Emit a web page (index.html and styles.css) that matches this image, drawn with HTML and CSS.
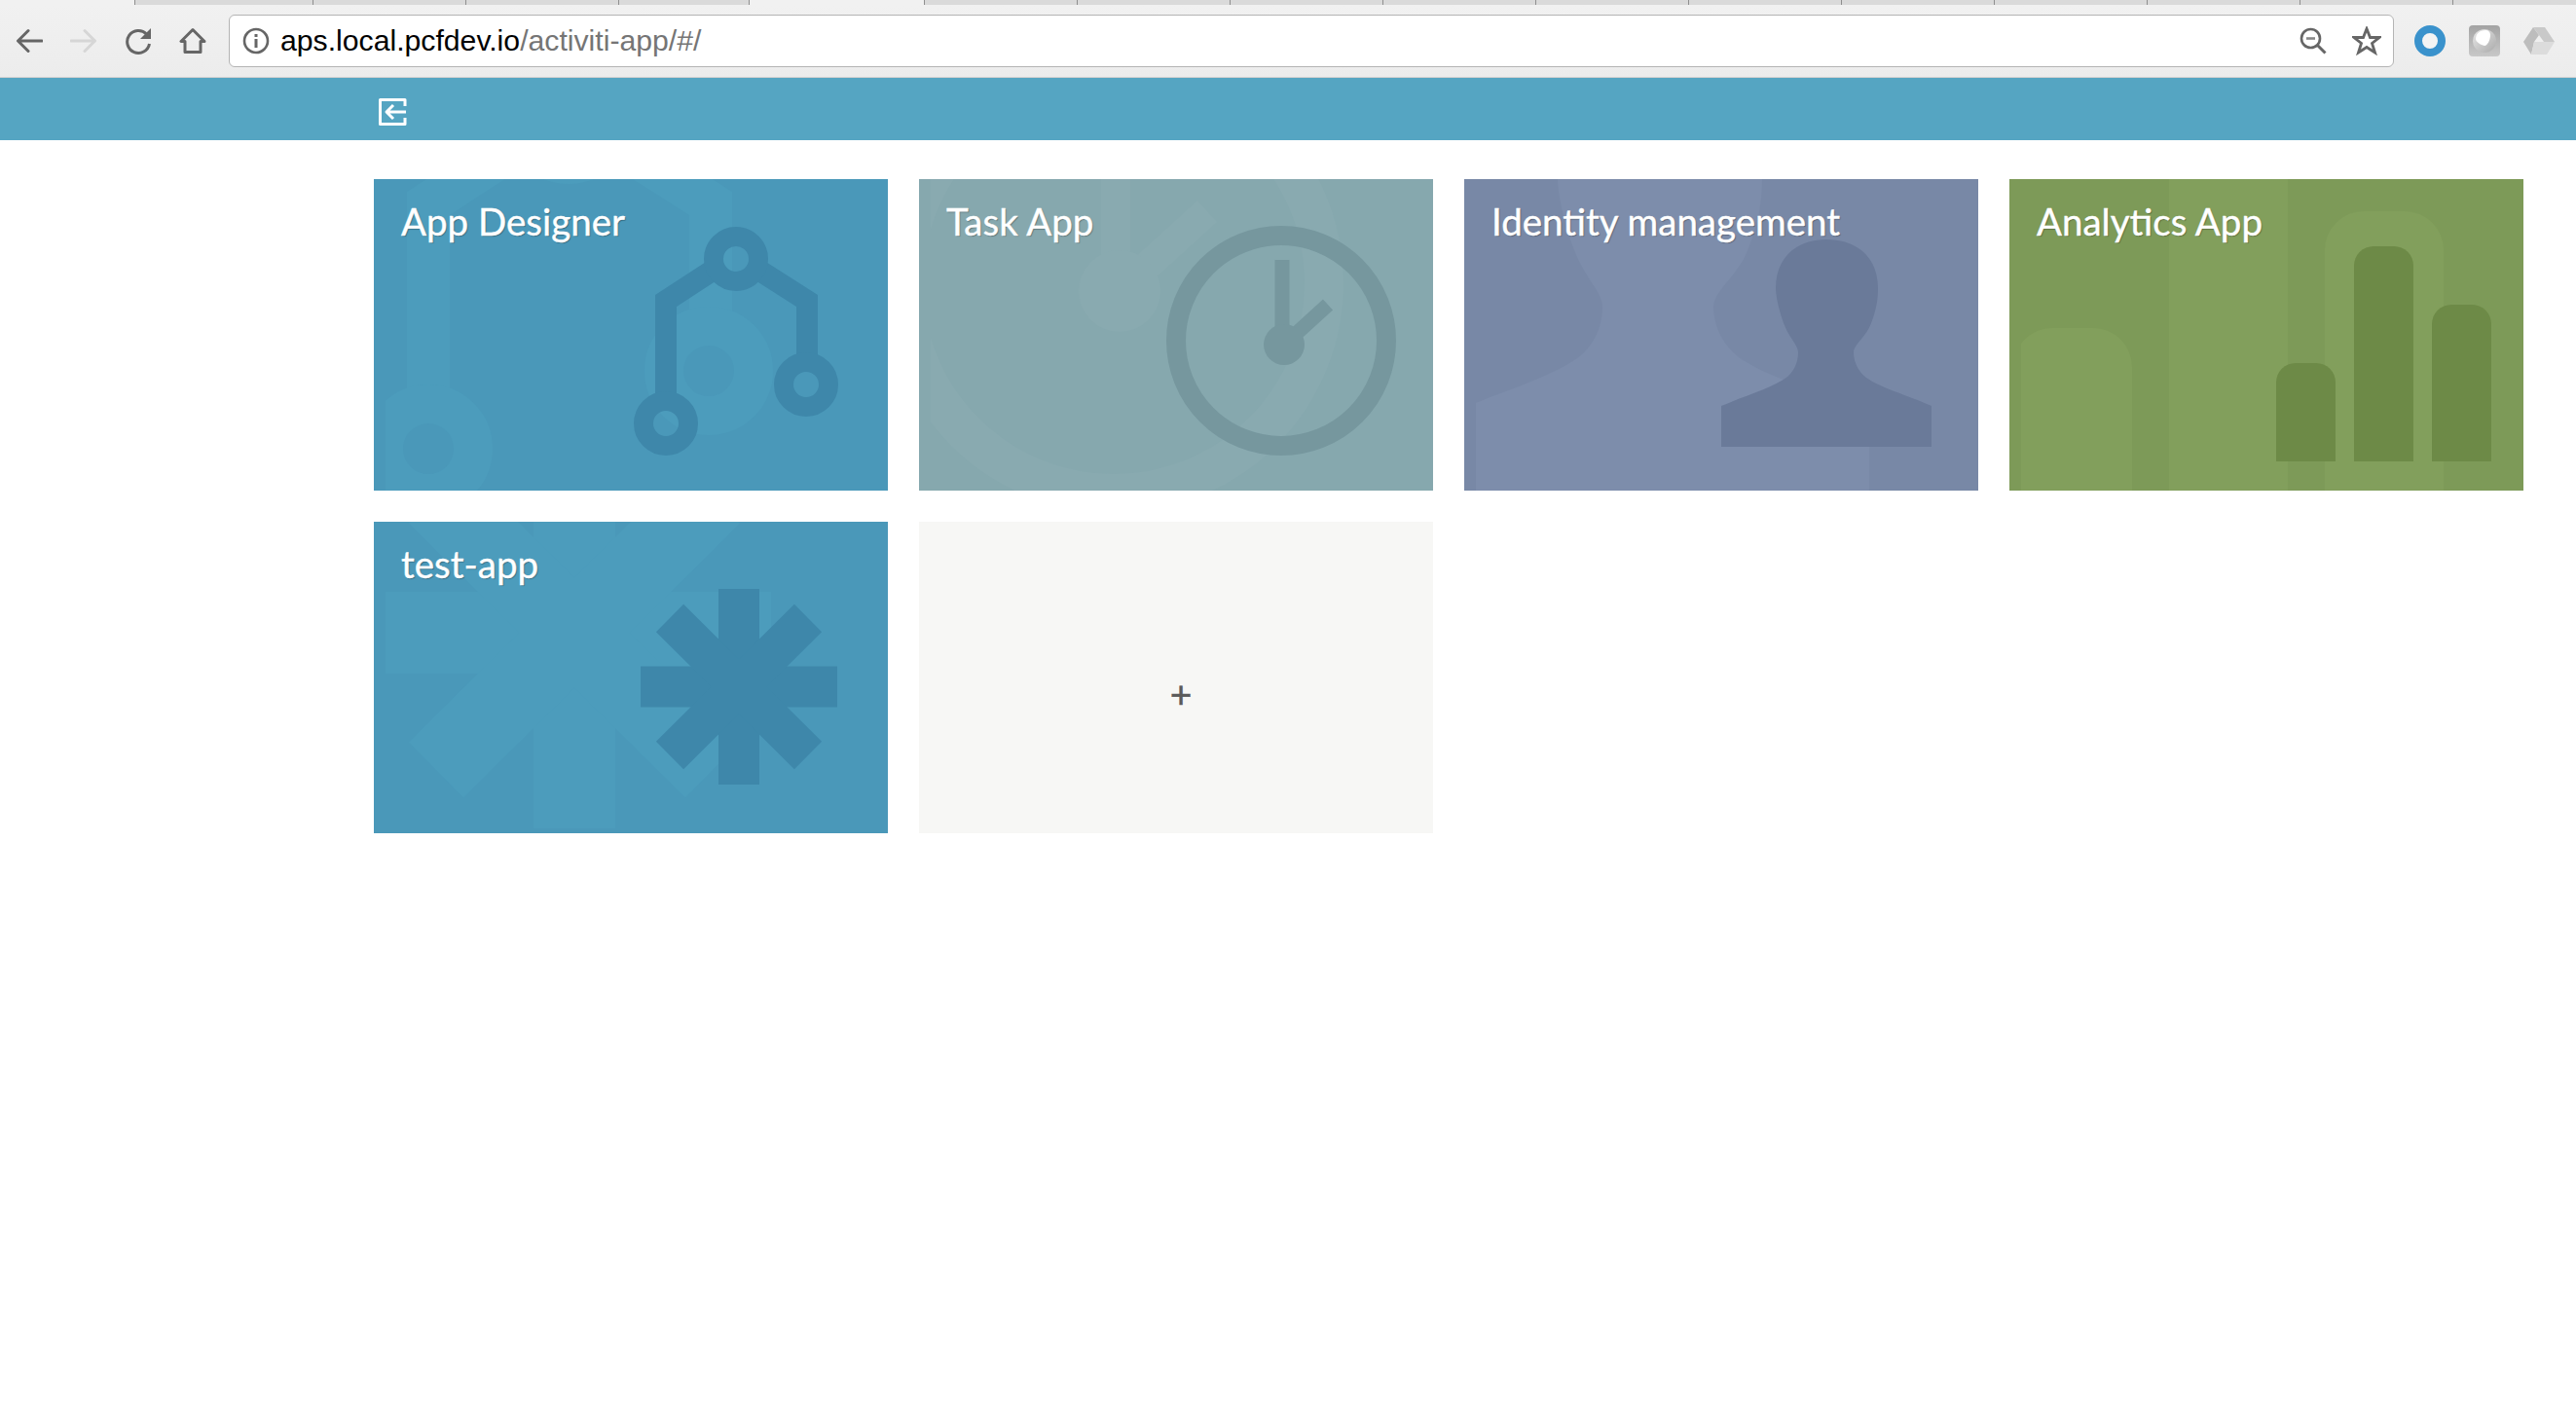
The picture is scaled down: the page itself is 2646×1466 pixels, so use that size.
FILE: index.html
```html
<!DOCTYPE html>
<html lang="en">
<head>
    <meta charset="UTF-8">
    <title>Activiti App</title>
    <link rel="stylesheet" href="styles.css">
</head>
<body>
    <!-- shapes shared by the card icons and their big faded copies -->
    <svg class="defs" width="0" height="0">
        <defs>
            <clipPath id="card-clip"><rect x="12" y="0" width="516" height="320"/></clipPath>
            <linearGradient id="ext-bg" x1="0" y1="0" x2="0" y2="1"><stop offset="0" stop-color="#a3a3a3"/><stop offset="1" stop-color="#c8c8c8"/></linearGradient>
            <linearGradient id="ext-disc" x1="0" y1="0" x2="1" y2="1"><stop offset="0" stop-color="#e8e8e8"/><stop offset="1" stop-color="#ababab"/></linearGradient>
            <g id="icon-designer" fill="none" stroke="currentColor">
                <path stroke-width="22" d="M300 232V125L346 95M398 95L445 125V192"/>
                <circle cx="372" cy="82" r="23" stroke-width="20"/>
                <circle cx="300" cy="251" r="23" stroke-width="20"/>
                <circle cx="444" cy="211" r="23" stroke-width="20"/>
            </g>
            <g id="icon-clock" fill="none" stroke="currentColor">
                <circle cx="372" cy="166" r="108" stroke-width="20"/>
                <path stroke-width="15" d="M373 83V170M375 170L420 129"/>
                <circle cx="375" cy="170" r="21" fill="currentColor" stroke="none"/>
            </g>
            <path id="icon-person" fill="currentColor" d="M264 233C290 222 318 214 332 203C341 195 343 185 343 178C343 170 333 163 327 145C322 130 320 118 320 112C320 80 342 62 372 62C403 62 425 80 425 112C425 125 423 135 418 148C413 162 400 170 400 178C400 187 404 197 413 204C427 214 455 222 480 233V275H264Z"/>
            <g id="icon-bars" fill="currentColor">
                <path d="M274 290V209a20 20 0 0 1 20-20h21a20 20 0 0 1 20 20V290Z"/>
                <path d="M354 290V89a20 20 0 0 1 20-20h21a20 20 0 0 1 20 20V290Z"/>
                <path d="M434 290V149a20 20 0 0 1 20-20h21a20 20 0 0 1 20 20V290Z"/>
            </g>
            <g id="icon-star" fill="none" stroke="currentColor">
                <path stroke-width="42" d="M375 69V270"/>
                <path stroke-width="42" d="M274 169.500H476"/>
                <path stroke-width="40" d="M304 99L446 240M446 99L304 240"/>
            </g>
        </defs>
    </svg>

    <div class="tab-strip">
        <span class="tab tab-first"></span><span class="tab"></span><span class="tab"></span><span class="tab tab-short"></span><span class="tab tab-active"></span>
        <span class="tab"></span><span class="tab"></span><span class="tab"></span><span class="tab"></span><span class="tab"></span>
        <span class="tab"></span><span class="tab"></span><span class="tab"></span><span class="tab"></span><span class="tab"></span>
        <span class="tab tab-last"></span>
    </div>

    <div class="toolbar">
        <svg class="tool-icon" viewBox="0 0 28 28" fill="none" stroke="#666" stroke-width="3" stroke-linejoin="round" stroke-linecap="round"><path d="M27 14H3M13 3.500L2.500 14L13 24.500"/></svg>
        <svg class="tool-icon" viewBox="0 0 28 28" fill="none" stroke="#d6d6d6" stroke-width="3" stroke-linejoin="round" stroke-linecap="round"><path d="M1 14H25M15 3.500L25.500 14L15 24.500"/></svg>
        <svg class="tool-icon" viewBox="0 0 28 28" fill="none" stroke="#666" stroke-width="3"><path d="M22.500 7A11.500 11.500 0 1 0 25.500 17"/><path fill="#666" stroke="none" d="M27 1V12H16Z"/></svg>
        <svg class="tool-icon" viewBox="0 0 28 28" fill="none" stroke="#666" stroke-width="3" stroke-linejoin="round"><path d="M14 2.500L2 14.500H6V25.500H22V14.500H26Z"/></svg>
        <div class="omnibox">
            <svg class="info-icon" viewBox="0 0 28 28" fill="none" stroke="#666" stroke-width="2.600"><circle cx="14" cy="14" r="12"/><path stroke-width="3" d="M14 12V21M14 7V10"/></svg>
            <span class="url"><b>aps.local.pcfdev.io</b>/activiti-app/#/</span>
            <svg class="zoom-icon" viewBox="0 0 28 28" fill="none" stroke="#666" stroke-width="2.600"><circle cx="11.500" cy="11.500" r="9.500"/><path stroke-width="3" d="M18 18L26.500 26.500"/><path stroke="#888" d="M7 11.500H16"/></svg>
            <svg class="star-icon" viewBox="0 0 30 30" fill="none" stroke="#666" stroke-width="2.800"><path d="M15 2.500L18.500 11.500H28L20.500 17.500L23.500 27L15 21.500L6.500 27L9.500 17.500L2 11.500H11.500Z"/></svg>
        </div>
        <div class="extensions">
            <span class="ext-ring"></span>
            <svg class="ext-icon" viewBox="0 0 32 32"><rect width="32" height="32" rx="4" fill="url(#ext-bg)"/><circle cx="16" cy="16" r="12" fill="url(#ext-disc)"/><path fill="#fff" d="M7 14C7 8 12 5 17 5C20 5 22 7 22 10C22 15 19 21 16 21C12 20 7 17 7 14Z"/></svg>
            <svg class="ext-icon" viewBox="0 -2 32 32"><path fill="#bdbdbd" d="M10 0L16 8L11 15L8 28L0 15Z"/><path fill="#c9c9c9" d="M10 0H22L32 15H21L16 8Z"/><path fill="#dcdcdc" d="M11 15H32L24 28H8Z"/></svg>
        </div>
    </div>

    <header class="app-bar">
        <svg class="logout-icon" viewBox="0 0 30 30" fill="none" stroke="#fff" stroke-width="3" stroke-linejoin="round"><path d="M28 9V2.500H2.500V27.500H28V21"/><path d="M29 15H10M16 8L9 15L16 22"/></svg>
    </header>

    <main class="tiles">
        <a class="tile tile-blue">
            <svg class="tile-art" viewBox="0 0 528 320"><g clip-path="url(#card-clip)"><use class="ghost" href="#icon-designer" transform="translate(-544 -225) scale(2)"/></g><use class="mark" href="#icon-designer"/></svg>
            <h3>App Designer</h3>
        </a>
        <a class="tile tile-teal">
            <svg class="tile-art" viewBox="0 0 528 320"><g clip-path="url(#card-clip)"><use class="ghost" href="#icon-clock" transform="translate(-544 -225) scale(2)"/></g><use class="mark" href="#icon-clock"/></svg>
            <h3>Task App</h3>
        </a>
        <a class="tile tile-slate">
            <svg class="tile-art" viewBox="0 0 528 320"><g clip-path="url(#card-clip)"><use class="ghost" href="#icon-person" transform="translate(-544 -225) scale(2)"/></g><use class="mark" href="#icon-person"/></svg>
            <h3>Identity management</h3>
        </a>
        <a class="tile tile-green">
            <svg class="tile-art" viewBox="0 0 528 320"><g clip-path="url(#card-clip)"><use class="ghost" href="#icon-bars" transform="translate(-544 -225) scale(2)"/></g><use class="mark" href="#icon-bars"/></svg>
            <h3>Analytics App</h3>
        </a>
        <a class="tile tile-blue">
            <svg class="tile-art" viewBox="0 0 528 320"><g clip-path="url(#card-clip)"><use class="ghost" href="#icon-star" transform="translate(-544 -225) scale(2)"/></g><use class="mark" href="#icon-star"/></svg>
            <h3>test-app</h3>
        </a>
        <a class="tile tile-add">+</a>
    </main>
</body>
</html>
```

FILE: styles.css
```css
body {
    margin: 0;
    background: #fff;
    font-family: "Lato", sans-serif;
}
.defs {
    position: absolute;
}

/* browser chrome */
.tab-strip {
    height: 5px;
    background: #f1f1f1;
    display: flex;
    padding-left: 138px;
    overflow: hidden;
}
.tab {
    width: 157px;
    background: #dadada;
    border-left: 1px solid #8f8f8f;
    box-sizing: border-box;
}
.tab-first {
    width: 183px;
}
.tab-short {
    width: 134px;
}
.tab-active {
    width: 180px;
    background: #f1f1f1;
}
.tab-last {
    flex: 1;
}
.toolbar {
    height: 75px;
    box-sizing: border-box;
    background: linear-gradient(#f1f1f1, #ececec);
    border-bottom: 1px solid #d0d0d0;
    display: flex;
    align-items: center;
    padding-left: 16px;
}
.tool-icon {
    width: 28px;
    height: 28px;
    margin-right: 28px;
}
.omnibox {
    width: 2224px;
    height: 54px;
    margin-left: -5px;
    box-sizing: border-box;
    background: #fff;
    border: 1px solid #b4b4b4;
    border-radius: 6px;
    display: flex;
    align-items: center;
    padding: 0 12px 0 13px;
}
.info-icon {
    width: 28px;
    height: 28px;
    margin-right: 11px;
}
.url {
    font-family: "Liberation Sans", sans-serif;
    font-size: 30.2px;
    color: #757575;
    flex: 1;
}
.url b {
    font-weight: normal;
    color: #000;
}
.zoom-icon {
    width: 28px;
    height: 28px;
    margin-right: 26px;
}
.star-icon {
    width: 30px;
    height: 30px;
}
.extensions {
    display: flex;
    align-items: center;
    gap: 24px;
    margin-left: 21px;
}
.ext-ring {
    width: 32px;
    height: 32px;
    box-sizing: border-box;
    border: 8px solid #3a92cc;
    border-radius: 50%;
    background: #f4f4f4;
}
.ext-icon {
    width: 32px;
    height: 32px;
}

/* app header */
.app-bar {
    height: 64px;
    box-sizing: border-box;
    padding: 6px 0 0 388px;
    background: #55a5c2;
    display: flex;
    align-items: center;
}
.logout-icon {
    width: 30px;
    height: 30px;
}

/* tiles */
.tiles {
    display: grid;
    grid-template-columns: repeat(4, 528px);
    grid-auto-rows: 320px;
    gap: 32px;
    padding: 40px 0 0 384px;
}
.tile {
    position: relative;
    display: block;
    overflow: hidden;
}
.tile h3 {
    position: relative;
    margin: 0;
    padding: 20px 28px;
    font-size: 38.5px;
    line-height: 46px;
    font-weight: 400;
    color: #fff;
    -webkit-text-stroke: 0.4px #fff;
    text-shadow: 1px 1px 1px rgba(0, 0, 0, 0.3);
}
.tile-art {
    position: absolute;
    left: 0;
    top: 0;
    width: 528px;
    height: 320px;
}
.tile-blue {
    background: #4a98b9;
}
.tile-blue .ghost {
    color: #4c9cbc;
}
.tile-blue .mark {
    color: #3e87aa;
}
.tile-teal {
    background: #86a8ae;
}
.tile-teal .ghost {
    color: #89aab0;
}
.tile-teal .mark {
    color: #76979e;
}
.tile-slate {
    background: #7888a6;
}
.tile-slate .ghost {
    color: #7d8dab;
}
.tile-slate .mark {
    color: #6a7a99;
}
.tile-green {
    background: #7d9a58;
}
.tile-green .ghost {
    color: #829f5c;
}
.tile-green .mark {
    color: #6d8a47;
}
.tile-add {
    background: #f7f7f5;
    color: #5a5a5a;
    font-size: 39px;
    -webkit-text-stroke: 0.5px #5a5a5a;
    display: flex;
    align-items: center;
    justify-content: center;
    padding: 31px 0 0 10px;
    box-sizing: border-box;
}
```
